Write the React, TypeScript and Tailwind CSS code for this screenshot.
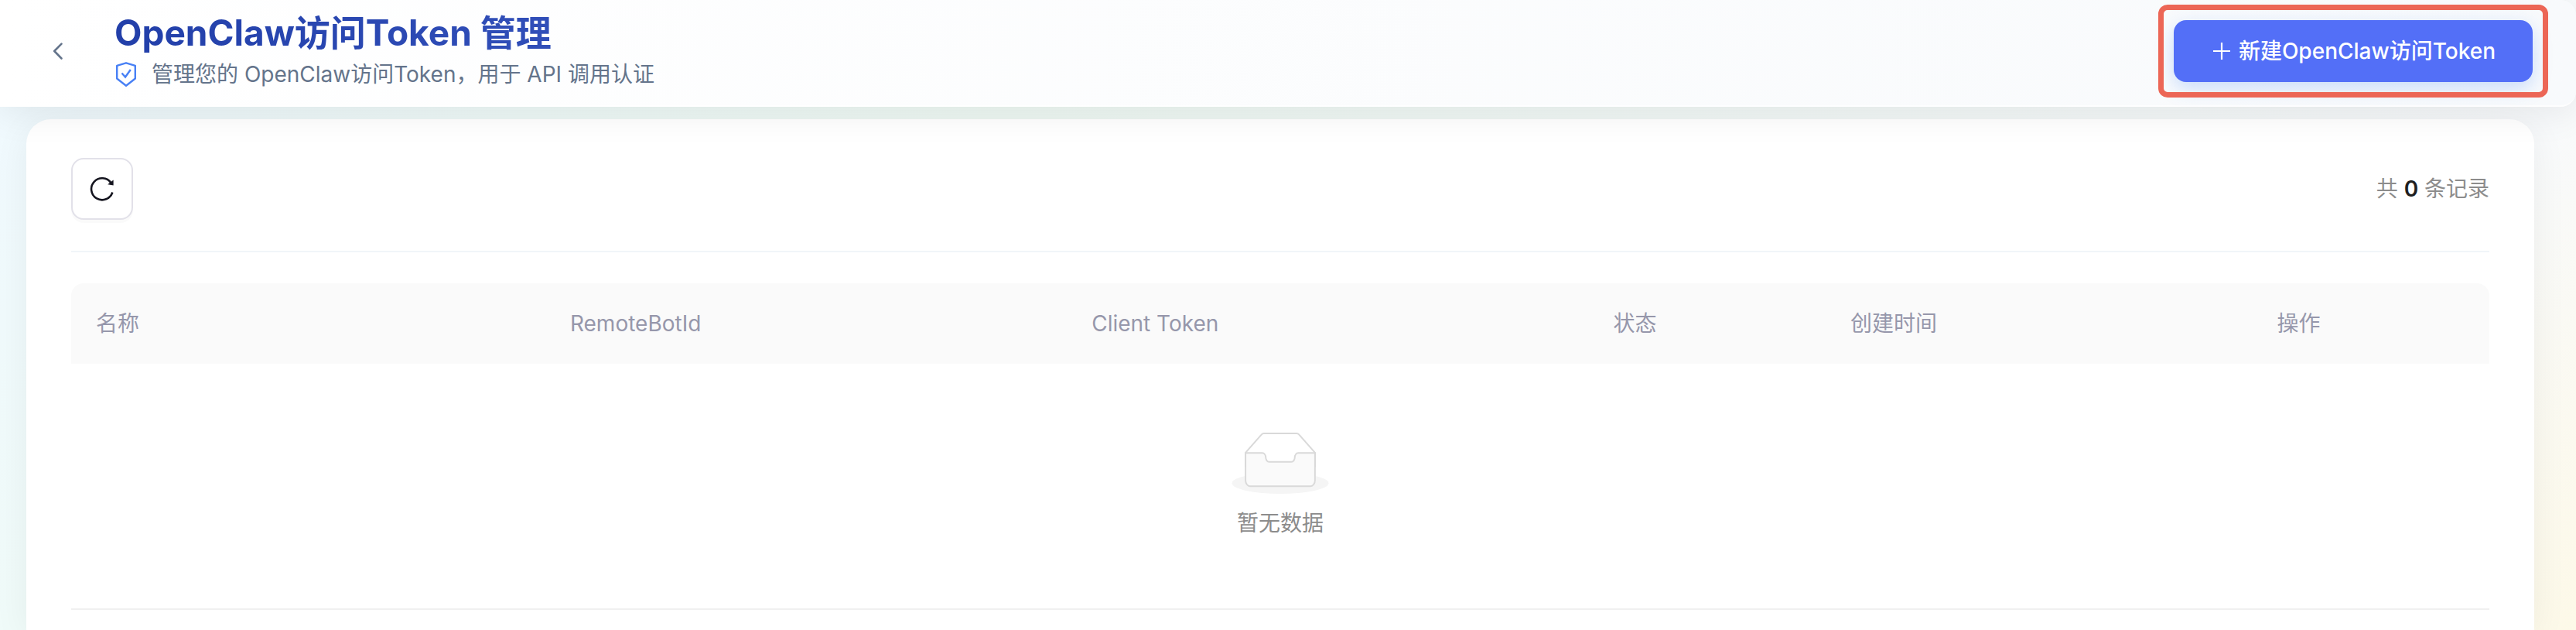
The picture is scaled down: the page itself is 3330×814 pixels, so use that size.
import { useState } from 'react';

type Column = {
  title: string;
  width: string;
};

type TokenRecord = {
  id: string;
  cells: string[];
};

const columns: Column[] = [
  { title: '名称', width: 'w-[200px]' },
  { title: 'RemoteBotId', width: 'w-[220px]' },
  { title: 'Client Token', width: 'w-[220px]' },
  { title: '状态', width: 'w-[100px]' },
  { title: '创建时间', width: 'w-[180px]' },
  { title: '操作', width: 'w-[100px]' },
];

function BackIcon() {
  return (
    <svg className="h-7 w-7" viewBox="0 0 28 28" fill="none" stroke="currentColor" strokeWidth="2.6" strokeLinecap="round" strokeLinejoin="round">
      <path d="M19.5 4.700L10.200 14L19.500 23.500" />
    </svg>
  );
}

function ShieldIcon() {
  return (
    <svg className="h-8 w-7" viewBox="0 0 28 32" fill="none" stroke="currentColor" strokeWidth="2.4">
      <path d="M15 1.300L26.800 4.800V21.500L15 30.800L3.200 21.500V4.800Z" strokeLinejoin="round" />
      <path d="M9.500 14.500L14 19.500L20.800 10" />
    </svg>
  );
}

function ReloadIcon() {
  return (
    <svg className="h-8 w-8" viewBox="0 0 32 32" fill="none">
      <path d="M29.400 20.500A14 14 0 1 1 27.500 8.200" stroke="currentColor" strokeWidth="2.600" />
      <path d="M30.600 4.500V11.600L23.200 10.200Z" fill="currentColor" />
    </svg>
  );
}

function PlusIcon() {
  return (
    <svg className="h-7 w-7" viewBox="0 0 28 28" fill="none" stroke="currentColor" strokeWidth="2.200">
      <path d="M14 3V25M3 14H25" />
    </svg>
  );
}

function EmptyIcon() {
  return (
    <svg className="h-20 w-32" viewBox="0 0 64 41">
      <g transform="translate(0 1)" fill="none" fillRule="evenodd">
        <ellipse fill="#f5f5f5" cx="32" cy="33" rx="32" ry="7" />
        <g fillRule="nonzero" stroke="#d9d9d9">
          <path d="M55 12.760L44.854 1.258C44.367.474 43.656 0 42.907 0H21.093c-.749 0-1.460.474-1.947 1.257L9 12.761V22h46v-9.240z" fill="#fff" />
          <path
            d="M41.613 15.931c0-1.605.994-2.930 2.227-2.931H55v18.137C55 33.260 53.680 35 52.050 35h-40.100C10.320 35 9 33.259 9 31.137V13h11.160c1.233 0 2.227 1.323 2.227 2.928v.022c0 1.605 1.005 2.901 2.237 2.901h14.752c1.232 0 2.237-1.308 2.237-2.913v-.007z"
            fill="#fafafa"
          />
        </g>
      </g>
    </svg>
  );
}

function PageHeader() {
  return (
    <header className="relative z-10 flex items-center justify-between rounded-r-[20px] border-b-2 border-white/80 bg-linear-to-r from-white to-[#f8fafc] pt-2 pr-14 pb-3 pl-15 shadow-[0_8px_48px_rgba(0,0,0,0.08)]">
      <div className="flex items-center gap-15">
        <button type="button" aria-label="返回" className="text-[#64748b]">
          <BackIcon />
        </button>
        <div className="flex flex-col pb-2">
          <h1 className="bg-linear-to-r from-[#223fa9] to-[#3452bc] bg-clip-text text-[46px] leading-[68px] font-bold text-transparent">
            OpenClaw访问Token 管理
          </h1>
          <p className="flex items-center gap-5 text-[28px] leading-10 text-[#64748b]">
            <span className="text-[#4880f5]">
              <ShieldIcon />
            </span>
            管理您的 OpenClaw访问Token，用于 API 调用认证
          </p>
        </div>
      </div>
      <div className="relative">
        <button
          type="button"
          className="flex h-20 items-center gap-2 rounded-2xl bg-[#536ff7] px-12 text-[28px] font-medium text-white shadow-[0_8px_24px_rgba(59,130,246,0.25)]"
        >
          <PlusIcon />
          新建OpenClaw访问Token
        </button>
        <div className="pointer-events-none absolute -inset-x-5 -inset-y-5 rounded-xl border-[7px] border-[#ec6656]" />
      </div>
    </header>
  );
}

function TokenTable({ records }: { records: TokenRecord[] }) {
  return (
    <table className="w-full table-fixed border-separate border-spacing-0 text-[28px] leading-11">
      <thead>
        <tr className="text-left text-[#9697ab]">
          {columns.map((column) => (
            <th
              key={column.title}
              className={`${column.width} h-26 bg-[#fafafa] px-8 font-normal first:rounded-tl-2xl last:rounded-tr-2xl`}
            >
              {column.title}
            </th>
          ))}
        </tr>
      </thead>
      <tbody>
        {records.length === 0 ? (
          <tr>
            <td colSpan={columns.length} className="border-b-2 border-[#f0f0f0] py-22">
              <div className="flex flex-col items-center gap-4 text-[#8c8c8c]">
                <EmptyIcon />
                <p>暂无数据</p>
              </div>
            </td>
          </tr>
        ) : (
          records.map((record) => (
            <tr key={record.id}>
              {record.cells.map((cell, index) => (
                <td key={index} className="border-b-2 border-[#f0f0f0] px-8 py-7">
                  {cell}
                </td>
              ))}
            </tr>
          ))
        )}
      </tbody>
    </table>
  );
}

export default function App() {
  const [records] = useState<TokenRecord[]>([]);

  return (
    <div className="flex min-h-screen flex-col overflow-hidden bg-[linear-gradient(135deg,#f0f9ff_0%,#f0fbf9_20%,#f0faf5_35%,#f8fafc_83%,#fdf9e8_100%)] font-[Inter,'Noto_Sans_CJK_SC',sans-serif]">
      <PageHeader />
      <main className="mt-4 mr-[54px] ml-[34px] flex-1 rounded-t-[32px] bg-white px-[58px] pt-[50px] shadow-[0_8px_48px_rgba(0,0,0,0.06)]">
        <div className="mb-10 flex items-center justify-between border-b-2 border-[#f1f5f9] pb-10">
          <button
            type="button"
            aria-label="刷新"
            className="flex h-20 w-20 items-center justify-center rounded-2xl border-2 border-[#e2e1e9] bg-white text-[#15151f] shadow-[0_4px_0_rgba(0,0,0,0.02)]"
          >
            <ReloadIcon />
          </button>
          <p className="text-[28px] leading-11 text-[#8c8c8c]">
            共 <strong className="font-semibold text-[#1f1f1f]">{records.length}</strong> 条记录
          </p>
        </div>
        <TokenTable records={records} />
      </main>
    </div>
  );
}
